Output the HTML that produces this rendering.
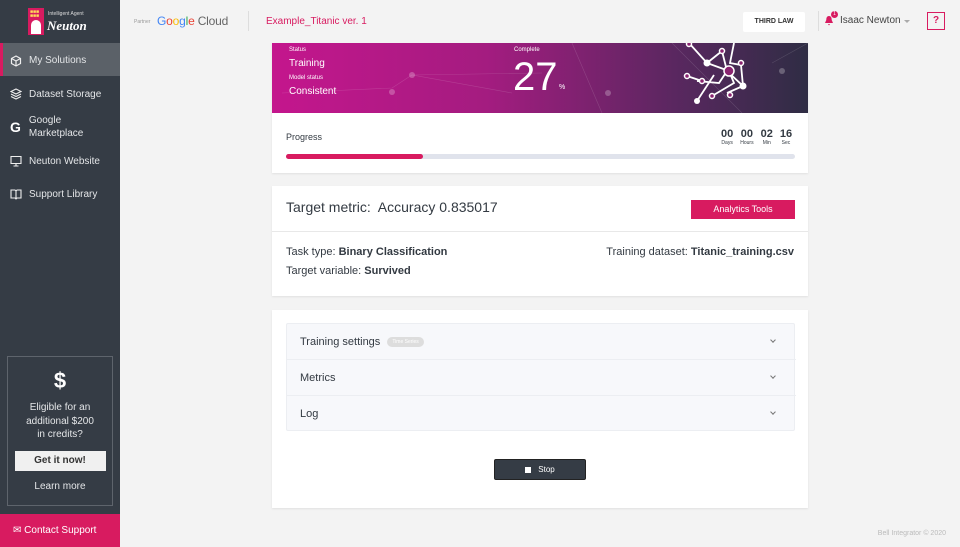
<!DOCTYPE html>
<html><head><meta charset="utf-8"><style>
*{box-sizing:border-box;margin:0;padding:0}
body{width:960px;height:547px;overflow:hidden;background:#f3f3f3;font-family:"Liberation Sans",sans-serif;color:#333a42;position:relative}
.sb{position:absolute;left:0;top:0;width:120px;height:547px;background:#353c45;color:#e4e6e8;font-size:10px}
.it{position:absolute;left:0;width:120px;display:flex;align-items:center;padding-left:10px}
.it svg{margin-right:7px;flex:none}
.abs{position:absolute}
.card{position:absolute;left:272px;width:536px;background:#fff;box-shadow:0 1px 2px rgba(0,0,0,.08)}
.row{position:absolute;left:0;width:509px;height:36px;border-bottom:1px solid #eceef2;display:flex;align-items:center;padding-left:13px;font-size:11px;color:#333a42}
.chev{position:absolute;right:21px;top:14px;width:4px;height:4px;border-right:1px solid #777;border-bottom:1px solid #777;transform:rotate(45deg)}
</style></head><body>
<div class="sb">
 <div class="abs" style="left:28px;top:8px;width:16px;height:27px;background:#d81b60"></div>
 <div class="abs" style="left:30px;top:10px;color:#ffde59;font-size:5px;letter-spacing:0;line-height:4px">■■■<br>■■■</div>
 <div class="abs" style="left:31px;top:20px;width:10px;height:14px;background:#fff;border-radius:5px 5px 0 0"></div>
 <div class="abs" style="left:48px;top:11px;font-size:5px;color:#ddd">Intelligent Agent</div>
 <div class="abs" style="left:47px;top:18px;font-size:13px;font-style:italic;font-weight:bold;color:#fff;font-family:'Liberation Serif',serif">Neuton</div>
 <div class="it" style="top:43px;height:33px;background:#5b6168;border-left:3px solid #d81b60;padding-left:7px;padding-top:2px"><svg width="12" height="12" viewBox="0 0 12 12" fill="none" stroke="#eee" stroke-width="1.2"><path d="M6 1l4.5 2.5v5L6 11 1.5 8.5v-5z M1.5 3.5L6 6l4.5-2.5M6 6v5"/></svg>My Solutions</div>
 <div class="it" style="top:84px;height:20px"><svg width="12" height="12" viewBox="0 0 12 12" fill="none" stroke="#eee" stroke-width="1.1"><path d="M6 1l5 2.5-5 2.5-5-2.5z M1 6l5 2.5L11 6 M1 8.5L6 11l5-2.5"/></svg>Dataset Storage</div>
 <div class="it" style="top:113px;height:28px;line-height:13px"><span style="font-weight:bold;font-size:14px;margin-right:8px;color:#fff">G</span><span>Google<br>Marketplace</span></div>
 <div class="it" style="top:151px;height:20px"><svg width="12" height="12" viewBox="0 0 12 12" fill="none" stroke="#eee" stroke-width="1.1"><path d="M1 1.5h10v7H1z M6 8.5v2M3.5 11h5"/></svg>Neuton Website</div>
 <div class="it" style="top:184px;height:20px"><svg width="12" height="12" viewBox="0 0 12 12" fill="none" stroke="#eee" stroke-width="1.1"><path d="M1 2h4l1 1 1-1h4v8H7l-1 1-1-1H1z M6 3v8"/></svg>Support Library</div>
 <div class="abs" style="left:7px;top:356px;width:106px;height:150px;border:1px solid #5e646c;text-align:center">
  <div style="margin-top:12px;font-size:22px;font-weight:bold;color:#fff;line-height:24px">$</div>
  <div style="margin-top:8px;font-size:10px;line-height:13.5px;color:#e4e6e8">Eligible for an<br>additional $200<br>in credits?</div>
  <div style="margin:9px auto 0;width:91px;height:20px;background:#f0f0f0;color:#333;font-weight:bold;font-size:10px;line-height:20px">Get it now!</div>
  <div style="margin-top:10px;font-size:10px">Learn more</div>
 </div>
 <div class="abs" style="left:0;top:514px;width:120px;height:33px;background:#d81b60;color:#fff;font-size:10px;line-height:33px;padding-left:13px">✉ Contact Support</div>
</div>
<div class="abs" style="left:134px;top:19px;font-size:5px;color:#999">Partner</div>
<div class="abs" style="left:157px;top:14px;font-size:12px;letter-spacing:-.2px"><span style="color:#4285f4">G</span><span style="color:#ea4335">o</span><span style="color:#fbbc05">o</span><span style="color:#4285f4">g</span><span style="color:#34a853">l</span><span style="color:#ea4335">e</span> <span style="color:#666">Cloud</span></div>
<div class="abs" style="left:248px;top:11px;width:1px;height:20px;background:#ddd"></div>
<div class="abs" style="left:266px;top:16px;font-size:10px;color:#d81b60">Example_Titanic ver. 1</div>
<div class="abs" style="left:743px;top:12px;width:62px;height:20px;background:#fff;border-radius:2px;font-size:7px;font-weight:bold;text-align:center;line-height:20px;color:#333">THIRD LAW</div>
<div class="abs" style="left:818px;top:11px;width:1px;height:20px;background:#ddd"></div>
<svg class="abs" style="left:824px;top:15px" width="10" height="11" viewBox="0 0 10 11"><path d="M5 1C2.8 1 2.3 3 2.3 5L1 8h8L7.7 5C7.7 3 7.2 1 5 1zM4 9h2l-1 1.5z" fill="#d81b60"/></svg>
<div class="abs" style="left:831px;top:11px;width:7px;height:7px;border-radius:50%;background:#d81b60;color:#fff;font-size:5px;text-align:center;line-height:7px">1</div>
<div class="abs" style="left:840px;top:15px;font-size:10px;color:#444">Isaac Newton</div>
<div class="abs" style="left:904px;top:20px;border:3px solid transparent;border-top-color:#aaa"></div>
<div class="abs" style="left:927px;top:12px;width:18px;height:18px;border:1px solid #d81b60;color:#d81b60;font-size:10px;font-weight:bold;text-align:center;line-height:16px">?</div>

<div class="card" style="top:43px;height:70px;background:linear-gradient(90deg,#c4168d 0%,#a41c80 40%,#5a2760 75%,#2f2d44 100%);color:#fff;overflow:hidden">
 <svg class="abs" style="left:0;top:0" width="536" height="70"><g stroke="rgba(255,255,255,.15)" stroke-width=".6" fill="none"><path d="M120 45L140 32L240 50M300 0L330 70M400 0L470 70M10 50L120 45M500 20L536 0M140 32L270 30"/></g><g fill="rgba(255,255,255,.25)"><circle cx="120" cy="49" r="3"/><circle cx="140" cy="32" r="3"/><circle cx="510" cy="28" r="3"/><circle cx="336" cy="50" r="3"/></g>
 <g stroke="#fff" stroke-width="1.8" fill="none"><path d="M417 0L435 20L457 28L462 40L440 53M435 20L450 8L455 28L471 43L455 50M455 28L447 40L425 38M462 0L458 20L469 22L471 43M442 32L425 58M415 33L430 38"/></g>
 <g fill="#fff"><circle cx="435" cy="20" r="3.5"/><circle cx="471" cy="43" r="3.5"/><circle cx="425" cy="58" r="3"/></g>
 <g stroke="#fff" stroke-width="1.5" fill="#8a2370"><circle cx="457" cy="28" r="5"/><circle cx="450" cy="8" r="2.5"/><circle cx="469" cy="20" r="2.5"/><circle cx="415" cy="33" r="2.5"/><circle cx="440" cy="53" r="2.5"/><circle cx="430" cy="38" r="2.5"/><circle cx="417" cy="1" r="2.5"/><circle cx="458" cy="52" r="2.5"/></g></svg>
 <div class="abs" style="left:17px;top:4px;font-size:6px">Status</div>
 <div class="abs" style="left:17px;top:15px;font-size:10px">Training</div>
 <div class="abs" style="left:17px;top:32px;font-size:6px">Model status</div>
 <div class="abs" style="left:17px;top:43px;font-size:10px">Consistent</div>
 <div class="abs" style="left:242px;top:4px;font-size:6px">Complete</div>
 <div class="abs" style="left:241px;top:12px;font-size:40px;font-weight:300;line-height:44px">27</div>
 <div class="abs" style="left:287px;top:41px;font-size:7px">%</div>
</div>
<div class="card" style="top:113px;height:60px">
 <div class="abs" style="left:14px;top:19px;font-size:9px">Progress</div>
 <div class="abs" style="left:14px;top:41px;width:509px;height:5px;border-radius:3px;background:#e0e3ec"><div style="width:137px;height:5px;border-radius:3px;background:#d81b60"></div></div>
 <div class="abs" style="left:449px;top:16px;display:flex;gap:7px;text-align:center;font-weight:bold;font-size:11px;line-height:11px">
  <div>00<div style="font-size:5px;font-weight:normal;line-height:7px">Days</div></div><div>00<div style="font-size:5px;font-weight:normal;line-height:7px">Hours</div></div><div>02<div style="font-size:5px;font-weight:normal;line-height:7px">Min</div></div><div>16<div style="font-size:5px;font-weight:normal;line-height:7px">Sec</div></div></div>
</div>
<div class="card" style="top:186px;height:110px">
 <div class="abs" style="left:14px;top:13px;font-size:14px">Target metric:&nbsp; Accuracy 0.835017</div>
 <div class="abs" style="left:419px;top:14px;width:104px;height:19px;background:#d81b60;color:#fff;font-size:9px;text-align:center;line-height:19px">Analytics Tools</div>
 <div class="abs" style="left:0;top:45px;width:536px;height:1px;background:#e8e8e8"></div>
 <div class="abs" style="left:14px;top:57px;font-size:11px;line-height:19px">Task type: <b>Binary Classification</b><br>Target variable: <b>Survived</b></div>
 <div class="abs" style="right:14px;top:57px;font-size:11px;line-height:19px">Training dataset: <b>Titanic_training.csv</b></div>
</div>
<div class="card" style="top:310px;height:198px">
 <div class="abs" style="left:14px;top:13px;width:509px;height:108px;background:#f7f8fb;border:1px solid #eceef2;border-radius:2px">
  <div class="row" style="top:0">Training settings<span style="margin-left:7px;background:#ddd;color:#fff;font-size:5px;border-radius:5px;padding:2px 5px">Time Series</span><div class="chev"></div></div>
  <div class="row" style="top:36px">Metrics<div class="chev"></div></div>
  <div class="row" style="top:72px;border:none">Log<div class="chev"></div></div>
 </div>
 <div class="abs" style="left:222px;top:149px;width:92px;height:21px;background:#353c45;border:1px solid #222;border-radius:2px;color:#fff;font-size:8px;display:flex;align-items:center;justify-content:center"><span style="width:6px;height:6px;background:#fff;margin-right:7px"></span>Stop</div>
</div>
<div class="abs" style="right:14px;top:530px;font-size:7px;color:#bbb">Bell Integrator © 2020</div>
</body></html>
